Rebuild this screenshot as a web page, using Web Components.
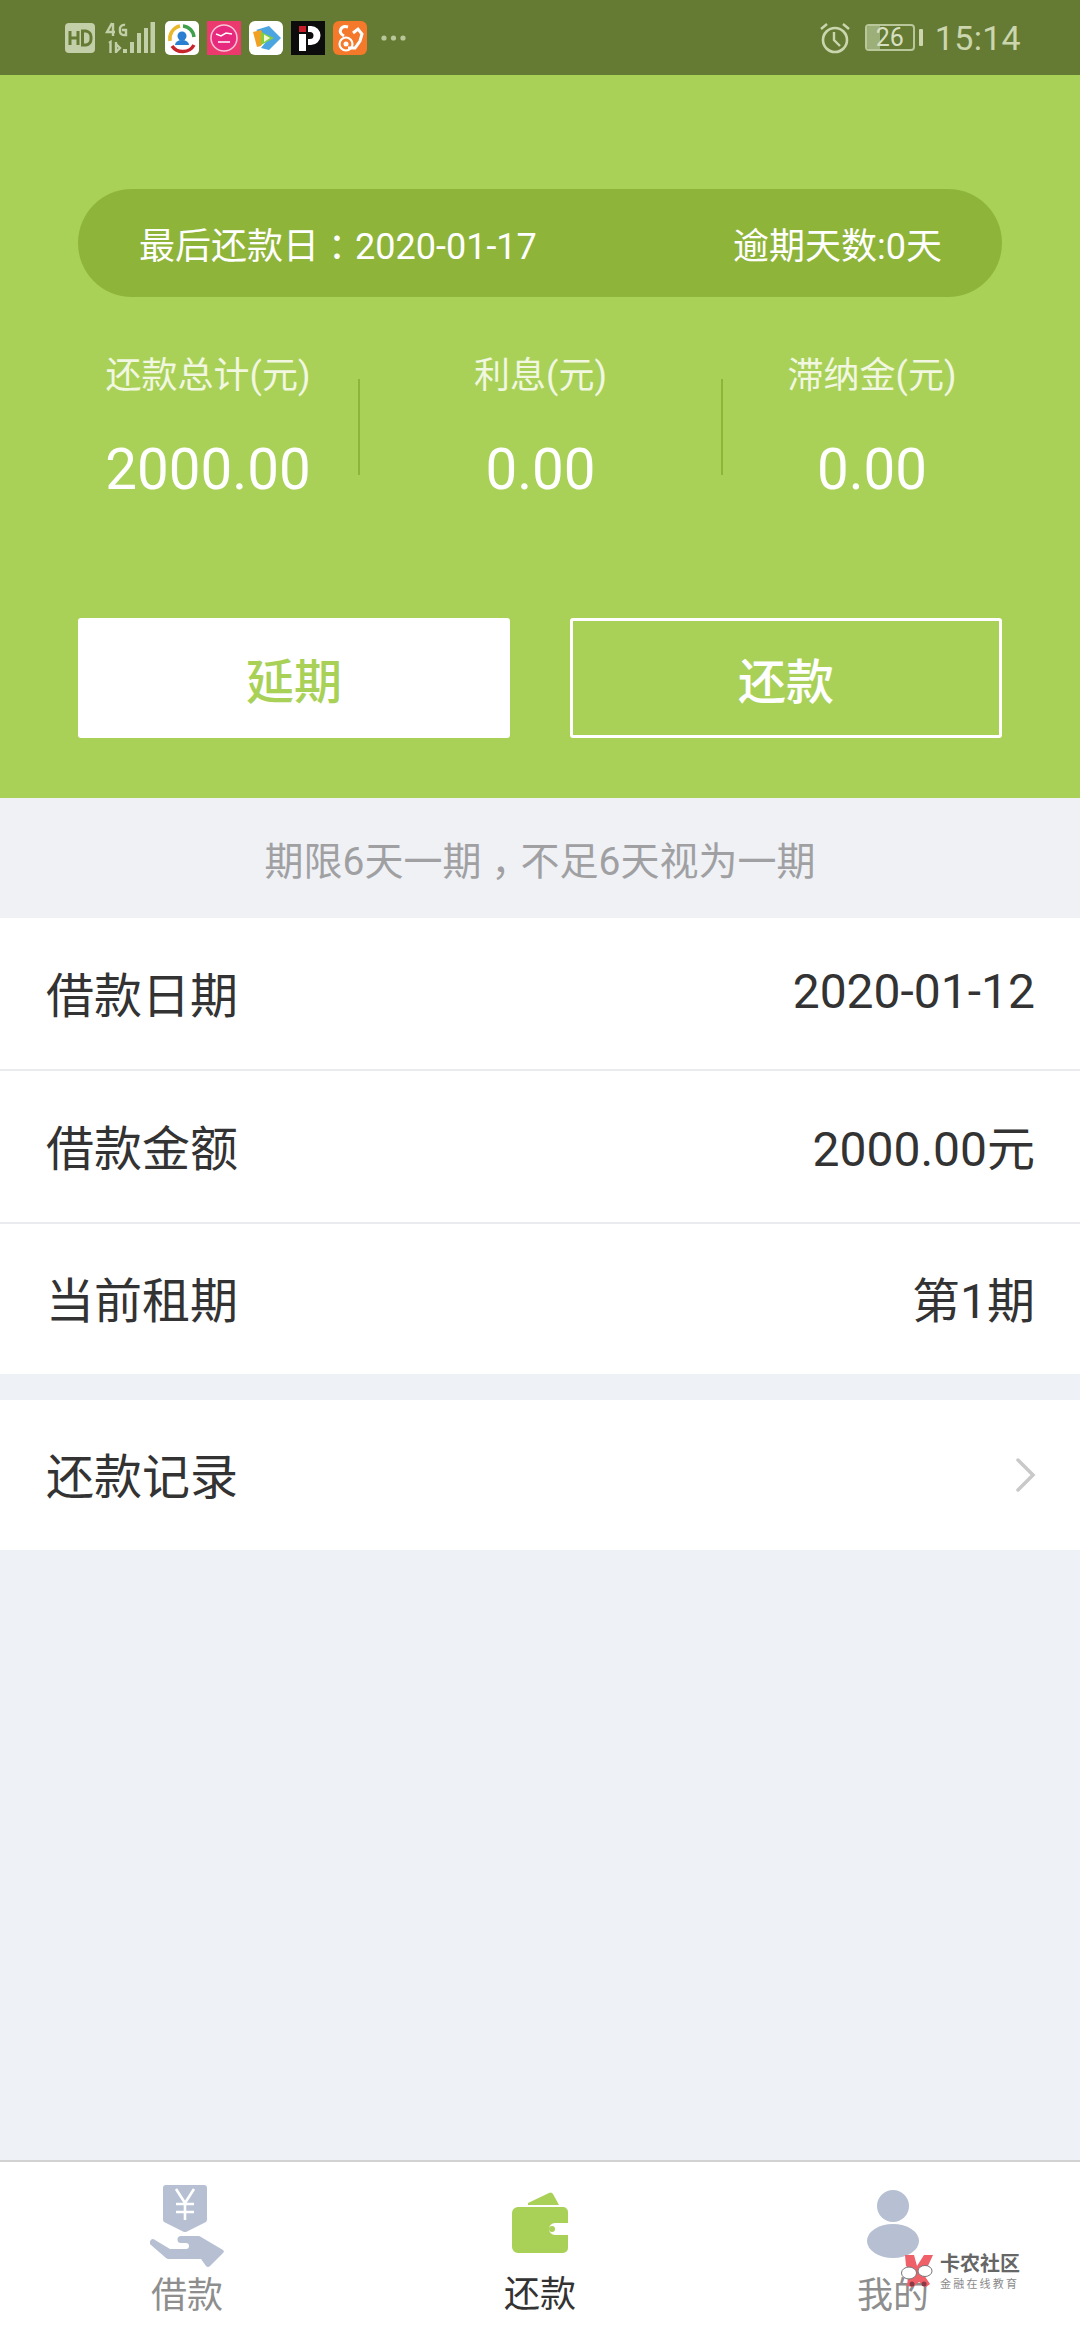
<!DOCTYPE html>
<html lang="zh-CN">
<head>
<meta charset="utf-8">
<title>还款</title>
<style>
html,body{margin:0;padding:0;background:#eef1f5;}
body{font-family:Roboto,"Noto Sans CJK SC",sans-serif;}
.nudge{font-family:"Noto Sans CJK SC",sans-serif;font-feature-settings:"halt";margin:0 .25em;}
</style>
</head>
<body>
<loan-app>
  <status-bar slot="status"></status-bar>
  <repay-panel slot="panel">
    <span slot="due">最后还款日<span class="nudge">：</span>2020-01-17</span>
    <span slot="overdue">逾期天数:0天</span>
    <stat-cell slot="s1" style="padding-left:2px" label="还款总计(元)" value="2000.00"></stat-cell>
    <stat-cell slot="s2" label="利息(元)" value="0.00"></stat-cell>
    <stat-cell slot="s3" label="滞纳金(元)" value="0.00"></stat-cell>
    <action-button slot="a1" kind="solid">延期</action-button>
    <action-button slot="a2" kind="outline">还款</action-button>
  </repay-panel>
  <note-band slot="note">期限6天一期<span class="nudge">，</span>不足6天视为一期</note-band>
  <info-row slot="rows" label="借款日期" value="2020-01-12"></info-row>
  <info-row slot="rows" label="借款金额" value="2000.00元"></info-row>
  <info-row slot="rows" label="当前租期" value="第1期" last></info-row>
  <info-row slot="record" label="还款记录" chevron last></info-row>
  <tab-bar slot="tabs">
    <tab-item label="借款">
      <svg slot="icon" width="74" height="84" viewBox="0 0 74 84">
        <path fill="#b6c0d2" d="M16 1H54a3 3 0 0 1 3 3V36a3 3 0 0 1-2 2.500L37 47.500a4 4 0 0 1-4 0L15 38.500a3 3 0 0 1-2-2.500V4a3 3 0 0 1 3-3Z"/>
        <path fill="none" stroke="#fff" stroke-width="2.600" d="M26 5L35 19L44 5M35 19V36M26 20H44M26 28H44"/>
        <path fill="#b6c0d2" d="M31 52H48a4 4 0 0 1 3 1L73 66a2 2 0 0 1 0 3L60 82a3 3 0 0 1-4 0L51 75H19a4 4 0 0 1-3-1L1 61a3 3 0 0 1 4-5L20 65H36a3 3 0 0 0 0-6H31a3.500 3.500 0 0 1 0-7Z"/>
      </svg>
    </tab-item>
    <tab-item label="还款" active>
      <svg slot="icon" width="58" height="62" viewBox="0 0 58 62">
        <path fill="#a9d158" d="M17 11L38 1a3 3 0 0 1 4 1L48 13H17Z"/>
        <path fill="#a9d158" d="M7 15H52a5 5 0 0 1 5 5V31H44a6 6 0 0 0 0 12H57V56a5 5 0 0 1-5 5H7a6 6 0 0 1-6-6V21a6 6 0 0 1 6-6Z"/>
        <circle cx="41" cy="37" r="3" fill="#a9d158"/>
      </svg>
    </tab-item>
    <tab-item label="我的">
      <svg slot="icon" width="54" height="70" viewBox="0 0 54 70">
        <circle cx="27" cy="17" r="16" fill="#b6c0d2"/>
        <ellipse cx="27" cy="52" rx="26" ry="17" fill="#b6c0d2"/>
      </svg>
    </tab-item>
  </tab-bar>
  <water-mark slot="mark"></water-mark>
</loan-app>

<script>
function def(name, html, init){
  customElements.define(name, class extends HTMLElement{
    constructor(){
      super();
      const r=this.attachShadow({mode:'open'});
      r.innerHTML=html;
      if(init) init(this,r);
    }
    connectedCallback(){ if(this.ready) this.ready(); }
  });
}

def('loan-app',`<style>
:host{display:flex;flex-direction:column;width:1080px;height:2340px;background:#eef1f5;position:relative;overflow:hidden;font-family:Roboto,"Noto Sans CJK SC",sans-serif;}
.record{display:block;margin-top:26px;}
.fill{flex:1;}
</style>
<slot name="status"></slot><slot name="panel"></slot><slot name="note"></slot>
<slot name="rows"></slot>
<div class="record"><slot name="record"></slot></div>
<div class="fill"></div>
<slot name="tabs"></slot><slot name="mark"></slot>`);

def('status-bar',`<style>
:host{display:flex;align-items:center;height:75px;background:#657b33;color:#cbd6ae;box-sizing:border-box;padding-left:65px;padding-right:59px;}
svg{display:block;flex:none;}
.apps{display:flex;gap:8px;margin-left:10px;}
.dots{margin-left:14px;}
.sp{flex:1;}
.batt{position:relative;width:50px;height:27px;box-sizing:border-box;border:2px solid #b9c79a;border-radius:4px;margin-left:15px;overflow:hidden;font:25px/23px Roboto,sans-serif;text-align:center;color:#d6dfc1;}
.batt i{position:absolute;left:0;top:0;bottom:0;width:13px;background:#9caf78;}
.batt span{position:relative;}
.nub{width:4px;height:17px;background:#cbd6ae;margin-left:4px;border-radius:1px;}
.time{font:34px/40px Roboto,sans-serif;margin-left:12px;color:#cbd6ae;letter-spacing:.3px;}
</style>
<svg width="30" height="30" viewBox="0 0 30 30"><rect width="30" height="30" rx="4" fill="#c3cfa8"/><path fill="none" stroke="#657b33" stroke-width="3" d="M5 8V22M13 8V22M5 15H13M17.500 8V22H21a6 6 0 0 0 5-6V14a6 6 0 0 0-5-6Z"/></svg>
<svg style="margin-left:10px" width="50" height="34" viewBox="0 0 50 34"><g fill="none" stroke="#c3cfa8" stroke-width="2.400"><path d="M7 2L2 11H10M8 2V15M20 4a4 4 0 0 0-5 3V11a4 4 0 0 0 5 3H21V9H17"/><path d="M4 22L5.500 21V32M11 21V32M11 23L15 27L11 31"/></g><path fill="#c3cfa8" d="M18 28h4v4h-4zM25 21h4v11h-4zM32 12h4v20h-4zM39 7h4v25h-4zM45.500 1h4.500v31h-4.500z"/></svg>
<div class="apps">
<svg width="34" height="34" viewBox="0 0 34 34"><rect width="34" height="34" rx="5" fill="#fff"/><path fill="none" stroke="#e9b92c" stroke-width="3.500" d="M5 20a13 13 0 0 1 10-15"/><path fill="none" stroke="#3ea04a" stroke-width="3.500" d="M18 5a12 12 0 0 1 11 11"/><path fill="none" stroke="#c8242c" stroke-width="3.500" d="M7 25a13 13 0 0 0 22-1"/><circle cx="17" cy="15" r="4.500" fill="#2a7fd0"/><path fill="#2a7fd0" d="M10 24a7 5 0 0 1 14 0Z"/></svg>
<svg width="34" height="34" viewBox="0 0 34 34"><rect width="34" height="34" fill="#ec3a6e"/><circle cx="17" cy="17" r="13" fill="#e72a7e" stroke="#f8c5d6" stroke-width="1.500"/><path fill="none" stroke="#fff" stroke-width="1.500" d="M9 13L14 15L19 12L25 13M11 21H23"/></svg>
<svg width="34" height="34" viewBox="0 0 34 34"><rect width="34" height="34" rx="6" fill="#fff"/><path fill="#4aa5e0" d="M7 9L20 5L32 17L20 29L12 27L20 17Z"/><path fill="#f2a023" d="M4 11L12 9L16 17L12 25L8 26Z"/><path fill="#7fcf3f" d="M12 11L25 17L12 24Z"/><path fill="#f6f6d0" d="M15 13.500L21 17L15 21Z"/></svg>
<svg width="34" height="34" viewBox="0 0 34 34"><rect width="34" height="34" fill="#0c0c0c"/><rect x="8" y="5" width="7" height="6" fill="#c81e2a"/><rect x="8" y="13" width="7" height="17" fill="#fff"/><path fill="#fff" d="M17 5H20a9.500 9.500 0 0 1 0 19H17V18H19a3.500 3.500 0 0 0 0-7H17Z"/></svg>
<svg width="34" height="34" viewBox="0 0 34 34"><rect width="34" height="34" rx="6" fill="#f5792a"/><circle cx="13" cy="23" r="6.500" fill="none" stroke="#fff" stroke-width="2.200"/><circle cx="13" cy="23" r="2.500" fill="#fff"/><path fill="none" stroke="#fff" stroke-width="3" d="M11 15C4 11 8 4 15 6M20 12L25 8L29 13L27 20L22 27H15"/></svg>
</div>
<svg class="dots" width="25" height="6" viewBox="0 0 25 6"><circle cx="3" cy="3" r="2.600" fill="#b9c79a"/><circle cx="12.500" cy="3" r="2.600" fill="#b9c79a"/><circle cx="22" cy="3" r="2.600" fill="#b9c79a"/></svg>
<div class="sp"></div>
<svg width="30" height="32" viewBox="0 0 30 32"><circle cx="15" cy="18" r="12" fill="none" stroke="#cbd6ae" stroke-width="2.600"/><path fill="none" stroke="#cbd6ae" stroke-width="2.400" d="M14 10V18L20 24M1 7L7 2M29 7L23 2"/></svg>
<div class="batt"><i></i><span>26</span></div><div class="nub"></div>
<div class="time">15:14</div>`);

def('repay-panel',`<style>
:host{display:block;background:#a9d158;padding:114px 0 60px;color:#fff;}
.pill{margin:0 78px;height:108px;box-sizing:border-box;padding:0 60px 0 61px;border-radius:54px;background:#8fb43a;display:flex;justify-content:space-between;align-items:center;font-size:36px;color:#fff;}
.stats{display:grid;grid-template-columns:302px 2px 361px 2px 298px;margin:54px 0 0 56px;height:144px;}
.sep{background:#8fb43a;margin-top:28px;height:96px;}
.btns{display:flex;gap:60px;margin:123px 78px 0;}
</style>
<div class="pill"><slot name="due"></slot><slot name="overdue"></slot></div>
<div class="stats"><slot name="s1"></slot><div class="sep"></div><slot name="s2"></slot><div class="sep"></div><slot name="s3"></slot></div>
<div class="btns"><slot name="a1"></slot><slot name="a2"></slot></div>`);

def('stat-cell',`<style>
:host{display:flex;flex-direction:column;align-items:center;}
.l{font-size:36px;line-height:50px;color:#f1f7e0;}
.v{font-size:56.500px;line-height:50px;margin-top:44px;color:#fff;}
</style><div class="l"></div><div class="v"></div>`,
(el,r)=>{el.ready=()=>{r.querySelector('.l').textContent=el.getAttribute('label');r.querySelector('.v').textContent=el.getAttribute('value');};});

def('action-button',`<style>
:host{display:flex;align-items:center;justify-content:center;width:432px;height:120px;box-sizing:border-box;font-size:48px;font-weight:500;border-radius:3px;}
:host([kind=solid]){background:#fff;color:#a9d158;}
:host([kind=outline]){border:3px solid #fff;color:#fff;}
</style><slot></slot>`);

def('note-band',`<style>
:host{display:flex;align-items:center;justify-content:center;height:120px;font-size:39px;color:#a0a0a3;background:#eff1f5;}
</style><slot></slot>`);

def('info-row',`<style>
:host{display:flex;align-items:center;justify-content:space-between;box-sizing:border-box;height:153px;padding:0 45px 4px 46px;background:#fff;border-bottom:2px solid #e9ebee;font-size:48px;color:#333;}
:host([last]){height:150px;border-bottom:0;}
svg{display:block;margin-right:-1px;margin-top:4px;}
</style><span class="l"></span><span class="v"></span>`,
(el,r)=>{el.ready=()=>{
  r.querySelector('.l').textContent=el.getAttribute('label');
  const v=r.querySelector('.v');
  if(el.hasAttribute('chevron')){v.innerHTML='<svg width="20" height="34" viewBox="0 0 20 34"><path fill="none" stroke="#c9c9c9" stroke-width="3.500" stroke-linecap="round" d="M2 2L17 17L2 32"/></svg>';}
  else v.textContent=el.getAttribute('value');
};});

def('tab-bar',`<style>
:host{display:grid;grid-template-columns:374px 332px 374px;height:180px;box-sizing:border-box;background:#fff;border-top:2px solid #d2d2d2;}
</style><slot></slot>`);

def('tab-item',`<style>
:host{display:flex;flex-direction:column;align-items:center;color:#8e8e8e;font-size:36px;height:178px;}
:host([active]){color:#333;}
.i{height:93px;display:flex;align-items:flex-end;justify-content:center;box-sizing:border-box;}
.t{line-height:48px;margin-top:17px;}
:host([active]) .i{height:92px;}
:host([label="借款"]) .i{height:106px;}
:host([label="借款"]) .t{margin-top:4px;}
:host([label="我的"]) .i{height:97px;}
:host([label="我的"]) .t{margin-top:13px;}
</style><div class="i"><slot name="icon"></slot></div><div class="t"></div>`,
(el,r)=>{el.ready=()=>{r.querySelector('.t').textContent=el.getAttribute('label');};});

def('water-mark',`<style>
:host{position:absolute;left:900px;top:2252px;display:flex;align-items:center;gap:6px;color:#6a6a6a;}
.a{font-size:20px;line-height:24px;font-weight:700;color:#666;}
.b{font-size:11px;line-height:14px;letter-spacing:2.200px;color:#8a8a8a;margin-top:2px;}
svg{display:block;}
</style>
<svg width="34" height="36" viewBox="0 0 34 36">
<path fill="#ef6069" d="M5 1H14L17 12L24 1H33L27 14L22 18L14 18L6 12Z"/>
<path fill="#ef6069" d="M8 22L14 18H22L26 24L30 30L26 33L19 28L13 33L7 32Z"/>
<ellipse cx="9" cy="19" rx="7.500" ry="6" fill="#fff" stroke="#777" stroke-width="1"/>
<ellipse cx="25" cy="17" rx="7" ry="5.500" fill="#fff" stroke="#777" stroke-width="1"/>
<circle cx="12" cy="30" r="2.500" fill="#8b3a44"/>
<circle cx="24" cy="30" r="2.500" fill="#8b3a44"/>
</svg>
<div><div class="a">卡农社区</div><div class="b">金融在线教育</div></div>`);
</script>
</body>
</html>
